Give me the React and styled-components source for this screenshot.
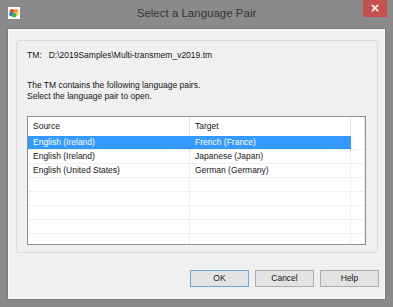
import React from "react";
import styled, { createGlobalStyle } from "styled-components";

const GlobalStyle = createGlobalStyle`
  html, body { margin: 0; padding: 0; background: #898989; }
  body { font-family: "Liberation Sans", Arial, sans-serif; }
  * { box-sizing: border-box; }
`;

const Window = styled.div`
  width: 393px;
  height: 307px;
  background: #8a8a8a;
  display: flex;
  flex-direction: column;
  overflow: hidden;
`;

const TitleBar = styled.div`
  height: 28px;
  display: grid;
  grid-template-columns: 1fr auto 1fr;
  align-items: start;
`;

const IconSlot = styled.div`
  padding: 7px 0 0 8px;
  display: flex;
`;

const Title = styled.div`
  font-size: 11.5px;
  line-height: 14px;
  color: #363636;
  padding-top: 6px;
  white-space: nowrap;
`;

const CloseButton = styled.div`
  justify-self: end;
  margin-right: 6px;
  width: 24px;
  height: 17px;
  background: #c75050;
  color: #fff;
  font-size: 12px;
  font-weight: bold;
  line-height: 16px;
  text-align: center;
  font-family: "DejaVu Sans", sans-serif;
`;

const Client = styled.div`
  flex: 1;
  margin: 0 7px 7px 7px;
  background: #f0f0f0;
  border: 1px solid #7c7c7c;
  box-shadow: inset 0 0 0 1px #fbfbfb;
  display: flex;
  flex-direction: column;
`;

const Panel = styled.div`
  margin: 11px 7px 0 8px;
  border: 1px solid #dcdcdc;
  border-radius: 3px;
  padding: 9px 11px 7px 10px;
  font-size: 8.5px;
  color: #151515;
`;

const Line = styled.div`
  line-height: 11px;
  white-space: nowrap;
`;

const PathLine = styled(Line)`
  display: flex;
  gap: 7px;
`;

const Paragraph = styled.div`
  margin-top: 19px;
`;

const Table = styled.div`
  margin-top: 14px;
  height: 129px;
  border: 1px solid #8e8f8f;
  background: #fff;
  overflow: hidden;
`;

const Row = styled.div`
  display: grid;
  grid-template-columns: 162px 161px 1fr;
  height: ${(p) => (p.$header ? "19px" : "14px")};
`;

const Cell = styled.div`
  padding-left: 5px;
  line-height: ${(p) => (p.$header ? "19px" : "13px")};
  border-right: 1px solid ${(p) => (p.$header ? "#e6e6e6" : "#f0f0f0")};
  border-bottom: ${(p) => (p.$header ? "0" : "1px solid #f0f0f0")};
  white-space: nowrap;
  overflow: hidden;
  background: ${(p) => (p.$selected ? "#3399ff" : "transparent")};
  color: ${(p) => (p.$selected ? "#fff" : "#151515")};
  border-right-color: ${(p) => (p.$selected ? "#3399ff" : undefined)};
`;

const ButtonRow = styled.div`
  margin: 17px 6px 0 0;
  display: flex;
  justify-content: flex-end;
  gap: 6px;
`;

const Button = styled.div`
  width: 59px;
  height: 17px;
  border: 1px solid ${(p) => (p.$focused ? "#6ea7df" : "#adadad")};
  background: #e3e3e3;
  font-size: 8.5px;
  line-height: 15px;
  text-align: center;
  color: #151515;
`;

function AppIcon() {
  return (
    <svg width="12" height="12" viewBox="0 0 12 12">
      <rect x="0" y="0" width="12" height="12" fill="#fdfdfd" />
      <circle cx="4" cy="4.2" r="2.3" fill="#e8463c" />
      <circle cx="8" cy="4.2" r="2.3" fill="#f29a2e" />
      <circle cx="3.2" cy="7" r="2.2" fill="#2f7fd6" />
      <circle cx="8.6" cy="7" r="2.1" fill="#f4cf3a" />
      <circle cx="6" cy="8.2" r="2.3" fill="#3db34a" />
    </svg>
  );
}

const rows = [
  ["English (Ireland)", "French (France)", true],
  ["English (Ireland)", "Japanese (Japan)", false],
  ["English (United States)", "German (Germany)", false],
  ["", "", false],
  ["", "", false],
  ["", "", false],
  ["", "", false],
  ["", "", false],
];

export default function App() {
  return (
    <>
      <GlobalStyle />
      <Window>
        <TitleBar>
          <IconSlot>
            <AppIcon />
          </IconSlot>
          <Title>Select a Language Pair</Title>
          <CloseButton>×</CloseButton>
        </TitleBar>
        <Client>
          <Panel>
            <PathLine>
              <span>TM:</span>
              <span>D:\2019Samples\Multi-transmem_v2019.tm</span>
            </PathLine>
            <Paragraph>
              <Line>The TM contains the following language pairs.</Line>
              <Line>Select the language pair to open.</Line>
            </Paragraph>
            <Table>
              <Row $header>
                <Cell $header>Source</Cell>
                <Cell $header>Target</Cell>
                <Cell $header />
              </Row>
              {rows.map(([s, t, sel], i) => (
                <Row key={i}>
                  <Cell $selected={sel}>{s}</Cell>
                  <Cell $selected={sel}>{t}</Cell>
                  <Cell />
                </Row>
              ))}
            </Table>
          </Panel>
          <ButtonRow>
            <Button $focused>OK</Button>
            <Button>Cancel</Button>
            <Button>Help</Button>
          </ButtonRow>
        </Client>
      </Window>
    </>
  );
}
